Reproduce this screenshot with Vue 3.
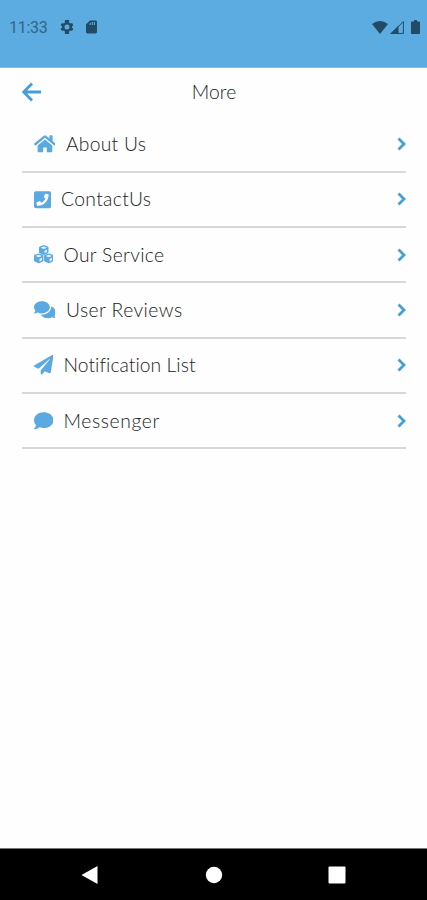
<script setup>
const items = [
  { label: 'About Us', key: 'about', w: 576, d: 'M280.37 148.26L96 300.11V464a16 16 0 0 0 16 16l112.06-.29a16 16 0 0 0 15.92-16V368a16 16 0 0 1 16-16h64a16 16 0 0 1 16 16v95.64a16 16 0 0 0 16 16.05L464 480a16 16 0 0 0 16-16V300L295.67 148.26a12.19 12.19 0 0 0-15.3 0zM571.6 251.47L488 182.56V44.05a12 12 0 0 0-12-12h-56a12 12 0 0 0-12 12v72.61L318.47 43a48 48 0 0 0-61 0L4.34 251.47a12 12 0 0 0-1.6 16.9l25.5 31A12 12 0 0 0 45.15 301l235.22-193.74a12.19 12.19 0 0 1 15.3 0L530.9 301a12 12 0 0 0 16.9-1.6l25.5-31a12 12 0 0 0-1.7-16.93z' },
  { label: 'ContactUs', key: 'contact', w: 448, d: 'M400 32H48A48 48 0 0 0 0 80v352a48 48 0 0 0 48 48h352a48 48 0 0 0 48-48V80a48 48 0 0 0-48-48zM94 416.400a15 15 0 0 1-14.600-11.600l-15-65a15 15 0 0 1 8.700-17.200l70-30a15 15 0 0 1 17.500 4.300l31 37.900c48.900-22.900 88-62.600 110.500-110.500l-37.900-31a15 15 0 0 1-4.300-17.500l30-70a15 15 0 0 1 17.200-8.700l65 15A15 15 0 0 1 384 126.700C384 286.800 254.300 416.400 94 416.400z' },
  { label: 'Our Service', key: 'service', w: 512, cubes: [[256, 36], [124, 254], [388, 254]] },
  { label: 'User Reviews', key: 'reviews', w: 576, d: 'M416 192c0-88.4-93.1-160-208-160S0 103.6 0 192c0 34.3 14.1 65.9 38 92-13.4 30.2-35.5 54.2-35.8 54.5-2.2 2.3-2.8 5.7-1.5 8.7S4.8 352 8 352c36.6 0 66.9-12.3 88.7-25 32.2 15.7 70.3 25 111.3 25 114.9 0 208-71.6 208-160zm122 220c23.9-26 38-57.7 38-92 0-66.9-53.5-124.2-129.3-148.1.9 6.6 1.3 13.3 1.3 20.1 0 105.9-107.7 192-240 192-10.8 0-21.3-.8-31.7-1.9C207.8 439.6 281.8 480 368 480c41 0 79.1-9.2 111.3-25 21.8 12.7 52.1 25 88.7 25 3.2 0 6.1-1.9 7.3-4.8 1.3-2.9.7-6.3-1.5-8.7-.3-.3-22.4-24.2-35.8-54.5z' },
  { label: 'Notification List', key: 'notification', w: 512, d: 'M476 3.2L12.5 270.6c-18.1 10.4-15.8 35.6 2.2 43.2L121 358.4l287.3-253.2c5.5-4.9 13.3 2.6 8.6 8.3L176 407v80.5c0 23.6 28.5 32.9 42.5 15.8L282 426l124.6 52.2c14.2 6 30.4-2.9 33-18.2l72-432C515 7.8 493.3-6.8 476 3.2z' },
  { label: 'Messenger', key: 'messenger', w: 512, d: 'M256 32C114.6 32 0 125.1 0 240c0 49.6 21.4 95 57 130.7C44.5 421.1 2.7 466 2.2 466.5c-2.2 2.3-2.8 5.7-1.5 8.7S4.8 480 8 480c66.3 0 116-31.8 140.6-51.4 32.7 12.3 69 19.4 107.4 19.4 141.4 0 256-93.1 256-208S397.4 32 256 32z' },
]
</script>

<template>
  <div class="screen">
    <header class="status">
      <span class="time">11:33</span>
      <svg class="gear" viewBox="2 2 20 20"><path fill-rule="evenodd" d="M19.14 12.94a7 7 0 0 0 0-1.88l2.03-1.58-1.92-3.32-2.39.96a7 7 0 0 0-1.62-.94L14.88 2H9.12l-.36 4.18a7 7 0 0 0-1.62.94l-2.39-.96-1.92 3.32 2.03 1.58a7 7 0 0 0 0 1.88l-2.03 1.58 1.92 3.32 2.39-.96a7 7 0 0 0 1.62.94L9.12 22h5.76l.36-4.18a7 7 0 0 0 1.62-.94l2.39.96 1.92-3.32zM12 15.6a3.6 3.6 0 1 1 0-7.2 3.6 3.6 0 0 1 0 7.2z" /></svg>
      <svg class="sd" viewBox="0 0 12 14"><path fill-rule="evenodd" d="M4.2 0H10.5A1.5 1.5 0 0 1 12 1.5V12.5A1.5 1.5 0 0 1 10.5 14H1.5A1.5 1.5 0 0 1 0 12.500V4.200zM4 2.300V4.700H5.200V2.300zM6.300 1.500V4.700H7.500V1.500zM8.600 1.500V4.700H9.800V1.500z" /></svg>
      <span class="spacer"></span>
      <svg class="wifi" viewBox="0 0 16 13"><path d="M0 3Q8-3 16 3L8 13z" /></svg>
      <svg class="signal" viewBox="0 0 14 14"><path d="M0 14L8.500 5.500V14z" /><path class="thin" d="M1.500 13.400L13.400 1.500V13.400z" /></svg>
      <svg class="battery" viewBox="0 0 9 14"><path d="M3 0H6V1.500H8.200Q9 1.500 9 2.300V13.200Q9 14 8.200 14H.8Q0 14 0 13.200V2.300Q0 1.500.8 1.500H3z" /></svg>
    </header>

    <main class="content">
      <div class="titlebar">
        <svg class="back" viewBox="0 0 20 20"><path d="M19 10H2M10 1.500L1.700 10L10 18.500" /></svg>
        <h1>More</h1>
      </div>
      <ul class="list">
        <li v-for="item in items" :key="item.key" class="row">
          <svg class="icon" :viewBox="`0 0 ${item.w} 512`">
            <path v-if="item.d" :d="item.d" />
            <g v-for="(c, i) in item.cubes" :key="i" :transform="`translate(${c[0]} ${c[1]})`">
              <path d="M0-32Q12-32 22-27L104 5Q124 13 124 34V152Q124 170 106 179L20 219Q0 228-20 219L-106 179Q-124 170-124 152V34Q-124 13-104 5L-22-27Q-12-32 0-32z" />
              <path class="face" d="M0 2L84 36L0 70L-84 36zM20 112L86 84V146L20 177z" />
            </g>
          </svg>
          <span class="label" :class="item.key">{{ item.label }}</span>
          <svg class="chevron" viewBox="0 0 9 14"><path d="M1.500 1.500L7 7L1.500 12.500" /></svg>
        </li>
      </ul>
    </main>

    <nav class="navbar">
      <svg viewBox="0 0 20 20"><path d="M1.500 10L17.500 1V19z" /></svg>
      <svg viewBox="0 0 20 20"><circle cx="10" cy="10" r="8.200" /></svg>
      <svg viewBox="0 0 20 20"><rect x="1.500" y="1.500" width="17" height="17" rx="1" /></svg>
    </nav>
  </div>
</template>

<style>
body { margin: 0; background: #fff; }
</style>

<style scoped>
.screen { width: 427px; height: 900px; display: flex; flex-direction: column; background: #fefefe; font-family: Lato, "Open Sans", sans-serif; overflow: hidden; }
.status { box-sizing: border-box; height: 68px; flex: none; display: flex; align-items: flex-start; padding: 20px 7.5px 0 9px; background: #5dace1; border-bottom: 1px solid #82bce8; fill: #234b66; }
.status svg { flex: none; }
.time { width: 51px; font: 400 16px/16px Roboto, sans-serif; letter-spacing: -.3px; color: #356484; }
.gear { width: 14px; height: 14px; }
.sd { width: 11px; height: 14px; margin-left: 12px; }
.spacer { flex: 1; }
.wifi { width: 16px; height: 13px; margin-top: 1px; }
.signal { width: 14px; height: 14px; margin-left: 2px; }
.thin { fill: none; stroke: #234b66; stroke-width: 1; }
.battery { width: 9px; height: 14px; margin: 0 0 0 7px; }
.content { flex: 1; padding: 0 21px 0 22px; }
.titlebar { height: 49.4px; display: grid; grid-template-columns: 20px 1fr 20px; align-items: center; }
.back { width: 20px; height: 20px; margin-top: -1px; fill: none; stroke: #429fdc; stroke-width: 2.8; }
h1 { margin: -2px 0 0; font-size: 19.3px; font-weight: 300; letter-spacing: .1px; color: #222; text-align: center; }
.list { margin: 0; padding: 0; list-style: none; }
.row { box-sizing: border-box; height: 55.3px; display: flex; align-items: center; padding: 0 .5px 0 11.5px; border-bottom: 2px solid #d8d8d8; }
.icon { height: 19.5px; width: auto; flex: none; fill: #5aaae1; }
.face { fill: #e8f4fc; }
.label { flex: 1; margin-left: 10.5px; font-size: 19.3px; font-weight: 300; line-height: 24px; color: #222; white-space: nowrap; font-variant-ligatures: none; }
.about { letter-spacing: .28px; }
.contact { letter-spacing: .33px; }
.service { letter-spacing: .32px; }
.reviews { letter-spacing: .45px; }
.notification { letter-spacing: .05px; }
.messenger { letter-spacing: .62px; }
.chevron { width: 9px; height: 14px; fill: none; stroke: #46a0d8; stroke-width: 2.8; }
.navbar { box-sizing: border-box; height: 52px; flex: none; display: flex; justify-content: space-between; align-items: center; padding: 0 80px; background: #000; border-top: 1px solid #777; fill: #fff; }
.navbar svg { width: 20px; height: 20px; }
</style>
